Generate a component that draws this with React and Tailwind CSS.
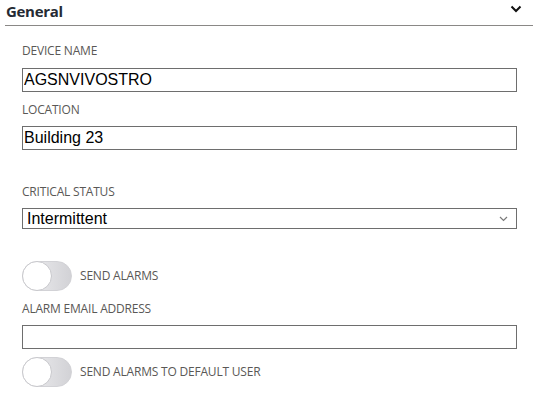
import React, { useState } from 'react';

const labelCls = "block h-4 leading-4 text-[12px] text-[#5a5856] font-['Open_Sans',sans-serif] tracking-[-0.2px]";
const inputCls = "block w-full h-[24px] border border-[#6e6e6e] bg-white px-[1px] text-[16px] leading-[22px] text-black font-['Liberation_Sans',Arial,sans-serif] outline-none";

function Toggle({ label, on, onChange, className }) {
  return (
    <div className={`flex items-center gap-[8px] ${className || ''}`}>
      <button
        onClick={onChange}
        className="relative w-[50px] h-[30px] rounded-full border border-[#d2d2d6] bg-gradient-to-r from-[#f0f0f2] to-[#d2d2d6]"
      >
        <span
          className={`absolute top-[-1px] w-[30px] h-[30px] rounded-full bg-white border border-[#c8c8cc] ${on ? 'left-[19px]' : 'left-[-1px]'}`}
        />
      </button>
      <span className="text-[12px] text-[#5a5856] font-['Open_Sans',sans-serif] tracking-[-0.2px]">{label}</span>
    </div>
  );
}

export default function App() {
  const [sendAlarms, setSendAlarms] = useState(false);
  const [sendDefault, setSendDefault] = useState(false);

  return (
    <div className="w-[537px] h-[403px] bg-white overflow-hidden">
      {/* section header */}
      <div className="ml-[5px] mr-[4px] h-[26px] flex items-center justify-between pl-[1px] pr-[11px] border-b border-[#8a8886]">
        <span className="text-[15px] font-bold text-[#252a33] font-['Open_Sans',sans-serif] tracking-[-0.3px] -mt-[2px]">General</span>
        <svg width="12" height="8" viewBox="0 0 12 8" className="-mt-[8px]">
          <polyline points="1.5,1.5 6,6 10.5,1.5" fill="none" stroke="#111" strokeWidth="2" />
        </svg>
      </div>

      <div className="pl-[22px] pr-[20px]">
        <label className={`${labelCls} mt-[17px]`}>DEVICE NAME</label>
        <input className={`${inputCls} mt-[9px]`} defaultValue="AGSNVIVOSTRO" />

        <label className={`${labelCls} mt-[10px]`}>LOCATION</label>
        <input className={`${inputCls} mt-[8px]`} defaultValue="Building 23" />

        <label className={`${labelCls} mt-[34px]`}>CRITICAL STATUS</label>
        <div className="mt-[8px] h-[21px] border border-[#6e6e6e] flex items-center justify-between pl-[4px] pr-[8px]">
          <span className="text-[16px] leading-[19px] text-black font-['Liberation_Sans',Arial,sans-serif]">Intermittent</span>
          <svg width="9" height="6" viewBox="0 0 9 6">
            <polyline points="1,1 4.5,4.5 8,1" fill="none" stroke="#7a7a7a" strokeWidth="1.2" />
          </svg>
        </div>

        <Toggle
          className="mt-[32px]"
          label="SEND ALARMS"
          on={sendAlarms}
          onChange={() => setSendAlarms(!sendAlarms)}
        />

        <label className={`${labelCls} mt-[10px]`}>ALARM EMAIL ADDRESS</label>
        <input className={`${inputCls} mt-[8px]`} defaultValue="" />

        <Toggle
          className="mt-[8px]"
          label="SEND ALARMS TO DEFAULT USER"
          on={sendDefault}
          onChange={() => setSendDefault(!sendDefault)}
        />
      </div>
    </div>
  );
}
